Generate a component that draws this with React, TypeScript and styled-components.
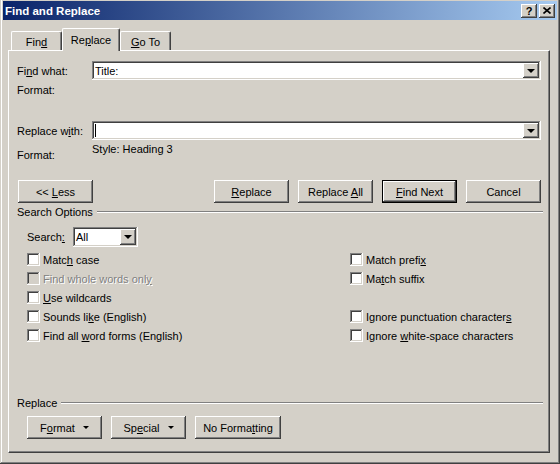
import React from 'react';
import styled, { createGlobalStyle, css } from 'styled-components';

const GlobalStyle = createGlobalStyle`
  html, body {
    margin: 0;
    padding: 0;
    background: #d4d0c8;
  }
  body {
    font-family: "Liberation Sans", Arial, sans-serif;
    font-size: 11px;
    color: #000;
  }
  * {
    box-sizing: border-box;
  }
`;

const raised = css`
  background: #d4d0c8;
  box-shadow: inset -1px -1px #404040, inset 1px 1px #ffffff,
    inset -2px -2px #808080, inset 2px 2px #d4d0c8;
`;

const sunken = css`
  box-shadow: inset -1px -1px #ffffff, inset 1px 1px #808080,
    inset -2px -2px #d4d0c8, inset 2px 2px #404040;
`;

const Window = styled.div`
  width: 560px;
  height: 464px;
  display: flex;
  flex-direction: column;
  padding: 1px 3px 3px 3px;
  background: #d4d0c8;
  box-shadow: inset -1px -1px #404040, inset 1px 0 #d4d0c8,
    inset -2px -2px #808080, inset 2px 0 #ffffff;
`;

const TitleBar = styled.div`
  height: 19px;
  flex: none;
  display: flex;
  align-items: center;
  padding: 0 2px 0 2px;
  background: linear-gradient(to right, #0a246a, #a6caf0);
  color: #fff;
  font-weight: bold;
  font-size: 11.5px;
`;

const Title = styled.span`
  flex: 1;
`;

const CaptionButton = styled.div`
  ${raised};
  width: 16px;
  height: 14px;
  margin-left: 2px;
  display: flex;
  align-items: center;
  justify-content: center;
  color: #000;
  font-size: 11px;
  font-weight: bold;
`;

const Body = styled.div`
  flex: 1;
  display: flex;
  flex-direction: column;
  padding: 8px 7px 8px 5px;
`;

const TabStrip = styled.div`
  height: 22px;
  flex: none;
  display: flex;
  align-items: flex-end;
  padding-left: 3px;
  position: relative;
  z-index: 1;
`;

const Tab = styled.div<{ $active?: boolean; $w: number }>`
  width: ${p => p.$w}px;
  height: ${p => (p.$active ? 23 : 19)}px;
  margin-bottom: ${p => (p.$active ? -1 : 0)}px;
  background: #d4d0c8;
  border-top: 1px solid #fff;
  border-left: 1px solid #fff;
  border-right: 1px solid #404040;
  border-radius: 2px 2px 0 0;
  box-shadow: inset -1px 0 #808080;
  text-align: center;
  padding-top: ${p => (p.$active ? 5 : 4)}px;
`;

const Panel = styled.div`
  flex: 1;
  display: flex;
  flex-direction: column;
  border-top: 1px solid #fff;
  border-left: 1px solid #fff;
  border-right: 1px solid #404040;
  border-bottom: 1px solid #404040;
  box-shadow: inset -1px -1px #808080;
  padding: 10px 8px 13px 8px;
`;

const Key = styled.span`
  text-decoration: underline;
`;

const FieldRow = styled.div<{ $mt?: number }>`
  display: flex;
  align-items: center;
  height: 19px;
  margin-top: ${p => p.$mt ?? 0}px;
`;

const Label = styled.div`
  width: 75px;
  flex: none;
`;

const Combo = styled.div<{ $w?: number }>`
  ${sunken};
  background: #fff;
  ${p => (p.$w ? `width: ${p.$w}px; flex: none;` : 'flex: 1;')}
  height: ${p => (p.$w ? 20 : 19)}px;
  display: flex;
  align-items: center;
  padding: 2px;
`;

const ComboText = styled.div`
  flex: 1;
  padding-left: 1px;
  display: flex;
  align-items: center;
`;

const Caret = styled.span`
  width: 1px;
  height: 13px;
  background: #000;
`;

const DropButton = styled.div`
  ${raised};
  width: 16px;
  height: 100%;
  flex: none;
  display: flex;
  align-items: center;
  justify-content: center;
`;

const Arrow = styled.span<{ $size?: number }>`
  width: 0;
  height: 0;
  border-left: ${p => p.$size ?? 4}px solid transparent;
  border-right: ${p => p.$size ?? 4}px solid transparent;
  border-top: ${p => p.$size ?? 4}px solid #000;
`;

const TextLine = styled.div<{ $mt?: number }>`
  height: 14px;
  line-height: 14px;
  margin-top: ${p => p.$mt ?? 0}px;
`;

const FormatRow = styled.div`
  display: flex;
  height: 23px;
`;

const FormatLabel = styled.div`
  width: 75px;
  padding-top: 9px;
`;

const FormatValue = styled.div`
  padding-top: 3px;
`;

const ButtonRow = styled.div<{ $mt: number; $pl?: number }>`
  display: flex;
  align-items: center;
  gap: 9px;
  margin-top: ${p => p.$mt}px;
  padding-left: ${p => p.$pl ?? 0}px;
`;

const Spacer = styled.div`
  flex: 1;
`;

const Button = styled.div<{ $w?: number; $default?: boolean }>`
  ${raised};
  width: ${p => p.$w ?? 75}px;
  height: 23px;
  flex: none;
  display: flex;
  align-items: center;
  justify-content: center;
  gap: 8px;
  ${p =>
    p.$default &&
    css`
      box-shadow: inset 0 0 0 1px #000, inset -2px -2px #404040,
        inset 2px 2px #ffffff, inset -3px -3px #808080;
    `}
`;

const GroupHeader = styled.div<{ $mt?: number }>`
  display: flex;
  align-items: center;
  height: 14px;
  margin-top: ${p => p.$mt ?? 0}px;
  margin-right: -2px;
`;

const GroupLine = styled.div`
  flex: 1;
  height: 2px;
  margin-left: 4px;
  border-top: 1px solid #808080;
  border-bottom: 1px solid #fff;
`;

const SearchRow = styled.div`
  display: flex;
  align-items: center;
  margin-top: 8px;
  padding-left: 10px;
`;

const SearchLabel = styled.div`
  width: 46px;
`;

const OptionGrid = styled.div`
  display: grid;
  grid-template-columns: 323px 1fr;
  grid-auto-rows: 19px;
  margin-top: 3px;
  padding-left: 10px;
`;

const Option = styled.div<{ $disabled?: boolean }>`
  display: flex;
  align-items: center;
  gap: 3px;
  color: ${p => (p.$disabled ? '#808080' : '#000')};
  text-shadow: ${p => (p.$disabled ? '1px 1px #fff' : 'none')};
`;

const Box = styled.span<{ $disabled?: boolean }>`
  ${sunken};
  width: 13px;
  height: 13px;
  flex: none;
  background: ${p => (p.$disabled ? '#d4d0c8' : '#fff')};
`;

const Bottom = styled.div`
  margin-top: auto;
`;

const CloseGlyph = () => (
  <svg width="8" height="7" viewBox="0 0 8 7">
    <path d="M0.5 0.5 L7.5 6.5 M7.5 0.5 L0.5 6.5" stroke="#000" strokeWidth="1.6" />
  </svg>
);

type Opt = { label: React.ReactNode; disabled?: boolean } | null;

const left: Opt[] = [
  { label: <>Matc<Key>h</Key> case</> },
  { label: <>Find whole words onl<Key>y</Key></>, disabled: true },
  { label: <><Key>U</Key>se wildcards</> },
  { label: <>Sounds li<Key>k</Key>e (English)</> },
  { label: <>Find all <Key>w</Key>ord forms (English)</> },
];

const right: Opt[] = [
  { label: <>Match prefi<Key>x</Key></> },
  { label: <>Ma<Key>t</Key>ch suffix</> },
  null,
  { label: <>Ignore punctuation character<Key>s</Key></> },
  { label: <>Ignore <Key>w</Key>hite-space characters</> },
];

const OptionCell = ({ opt }: { opt: Opt }) =>
  opt ? (
    <Option $disabled={opt.disabled}>
      <Box $disabled={opt.disabled} />
      <span>{opt.label}</span>
    </Option>
  ) : (
    <div />
  );

export default function App() {
  return (
    <>
      <GlobalStyle />
      <Window>
        <TitleBar>
          <Title>Find and Replace</Title>
          <CaptionButton>?</CaptionButton>
          <CaptionButton>
            <CloseGlyph />
          </CaptionButton>
        </TitleBar>
        <Body>
          <TabStrip>
            <Tab $w={51}>Fin<Key>d</Key></Tab>
            <Tab $w={58} $active>Re<Key>p</Key>lace</Tab>
            <Tab $w={51}><Key>G</Key>o To</Tab>
          </TabStrip>
          <Panel>
            <FieldRow>
              <Label>Fi<Key>n</Key>d what:</Label>
              <Combo>
                <ComboText>Title:</ComboText>
                <DropButton><Arrow /></DropButton>
              </Combo>
            </FieldRow>
            <TextLine $mt={3}>Format:</TextLine>
            <FieldRow $mt={24}>
              <Label>Replace w<Key>i</Key>th:</Label>
              <Combo>
                <ComboText><Caret /></ComboText>
                <DropButton><Arrow /></DropButton>
              </Combo>
            </FieldRow>
            <FormatRow>
              <FormatLabel>Format:</FormatLabel>
              <FormatValue>Style: Heading 3</FormatValue>
            </FormatRow>
            <ButtonRow $mt={17} $pl={1}>
              <Button><span>&lt;&lt; <Key>L</Key>ess</span></Button>
              <Spacer />
              <Button><span><Key>R</Key>eplace</span></Button>
              <Button><span>Replace <Key>A</Key>ll</span></Button>
              <Button $default><span><Key>F</Key>ind Next</span></Button>
              <Button><span>Cancel</span></Button>
            </ButtonRow>
            <GroupHeader $mt={2}>
              Search Options
              <GroupLine />
            </GroupHeader>
            <SearchRow>
              <SearchLabel>Search<Key>:</Key></SearchLabel>
              <Combo $w={65}>
                <ComboText>All</ComboText>
                <DropButton><Arrow /></DropButton>
              </Combo>
            </SearchRow>
            <OptionGrid>
              {left.map((o, i) => (
                <React.Fragment key={i}>
                  <OptionCell opt={o} />
                  <OptionCell opt={right[i]} />
                </React.Fragment>
              ))}
            </OptionGrid>
            <Bottom>
              <GroupHeader>
                Replace
                <GroupLine />
              </GroupHeader>
              <ButtonRow $mt={6} $pl={10}>
                <Button><span>F<Key>o</Key>rmat</span><Arrow $size={3} /></Button>
                <Button><span>Sp<Key>e</Key>cial</span><Arrow $size={3} /></Button>
                <Button $w={86}><span>No Forma<Key>t</Key>ting</span></Button>
              </ButtonRow>
            </Bottom>
          </Panel>
        </Body>
      </Window>
    </>
  );
}
